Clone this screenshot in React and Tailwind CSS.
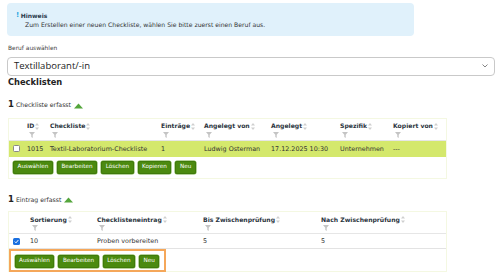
import React from "react";

const Sort = () => (
  <svg width="4" height="7" viewBox="0 0 4 7" className="ml-[1px] shrink-0">
    <path d="M2 0 L4 2.5 L0 2.5 Z" fill="#d0d0d0" />
    <path d="M0 4.5 L4 4.5 L2 7 Z" fill="#d0d0d0" />
  </svg>
);

const Filter = () => (
  <svg width="6" height="6" viewBox="0 0 6 6" className="block">
    <path d="M0 0 L6 0 L3.7 2.8 L3.7 6 L2.3 5 L2.3 2.8 Z" fill="#c4c4c4" />
  </svg>
);

const Th = ({ w, label, sort = true }) => (
  <div className={`${w} shrink-0 pl-[4px] pt-[4px]`}>
    <div className="flex items-center h-[7px] font-bold text-[6.1px] text-[#2b3440] whitespace-nowrap leading-none">
      <span>{label}</span>
      {sort && <Sort />}
    </div>
    <div className="pl-[2px] mt-[2px]">
      <Filter />
    </div>
  </div>
);

const Btn = ({ children }) => (
  <div className="h-[13px] px-[3.5px] flex items-center rounded-[2px] bg-[#4b8a0f] text-white text-[5.7px] leading-none border border-[#3f7a0a] shadow-[0_0_0_0.5px_#6fa53a] whitespace-nowrap">
    {children}
  </div>
);

const Caret = () => (
  <svg width="9" height="6" viewBox="0 0 9 6" className="ml-[3px]">
    <path d="M4.5 0.5 L9 5.5 L0 5.5 Z" fill="#54a63c" />
  </svg>
);

const Td = ({ w, children }) => (
  <div className={`${w} shrink-0 pl-[4px] whitespace-nowrap text-[#333333]`}>{children}</div>
);

export default function App() {
  return (
    <div className="w-[500px] h-[279px] overflow-hidden bg-white text-[#333] font-['DejaVu_Sans',sans-serif]">
      <div className="pl-[7px] pt-[3px]">
        {/* info */}
        <div className="w-[407px] h-[33px] rounded-[4px] bg-[#e0f1fb] pl-[9px] pt-[9px]">
          <div className="flex items-center text-[6px] leading-none font-bold text-[#2a3a4a]">
            <span className="text-[#2aa4e0] mr-[1.5px] text-[7px]">!</span>
            <span>Hinweis</span>
          </div>
          <div className="pl-[9px] mt-[3px] text-[6.1px] leading-none text-[#333]">
            Zum Erstellen einer neuen Checkliste, wählen Sie bitte zuerst einen Beruf aus.
          </div>
        </div>
        {/* label */}
        <div className="mt-[10px] pl-[1px] text-[5.9px] leading-none text-[#444]">Beruf auswählen</div>
        {/* select */}
        <div className="mt-[5px] w-[488px] h-[19px] border border-[#c9c9c9] rounded-[4px] flex items-center justify-between pl-[6px] pr-[6px] font-['Open_Sans',sans-serif] text-[9.5px] text-[#222]">
          <span>Textillaborant/-in</span>
          <svg width="6" height="4" viewBox="0 0 6 4">
            <path d="M0.5 0.5 L3 3 L5.5 0.5" stroke="#777" strokeWidth="0.9" fill="none" />
          </svg>
        </div>
        <div className="pl-[1px] mt-[2px] text-[8.3px] font-bold leading-none text-[#222]">Checklisten</div>

        {/* count 1 */}
        <div className="mt-[14px] pl-[1px] flex items-end leading-none">
          <span className="text-[8.5px] font-bold text-[#222]">1</span>
          <span className="text-[6.2px] ml-[2px] text-[#333] mb-[0.5px]">Checkliste erfasst</span>
          <Caret />
        </div>

        {/* table 1 */}
        <div className="mt-[9px] ml-[1px] w-[439px] h-[61px] border border-[#f4f8e2]">
          <div className="flex h-[22px] border-b border-[#e6e6e6]">
            <div className="w-[14px] shrink-0" />
            <Th w="w-[23px]" label="ID" />
            <Th w="w-[111px]" label="Checkliste" />
            <Th w="w-[43px]" label="Einträge" />
            <Th w="w-[67px]" label="Angelegt von" />
            <Th w="w-[69px]" label="Angelegt" />
            <Th w="w-[53px]" label="Spezifik" />
            <Th w="w-[58px]" label="Kopiert von" />
          </div>
          <div className="flex h-[16px] items-center bg-[#d4e86c] text-[6.4px] leading-none">
            <div className="w-[14px] shrink-0 pl-[4px]">
              <div className="w-[7px] h-[7px] bg-white border border-[#888] rounded-[1.5px]" />
            </div>
            <Td w="w-[23px]">1015</Td>
            <Td w="w-[111px]">Textil-Laboratorium-Checkliste</Td>
            <Td w="w-[43px]">1</Td>
            <Td w="w-[67px]">Ludwig Osterman</Td>
            <Td w="w-[69px]">17.12.2025 10:30</Td>
            <Td w="w-[53px]">Unternehmen</Td>
            <Td w="w-[58px]">---</Td>
          </div>
          <div className="flex gap-[4px] pl-[4px] pt-[4px]">
            <Btn>Auswählen</Btn>
            <Btn>Bearbeiten</Btn>
            <Btn>Löschen</Btn>
            <Btn>Kopieren</Btn>
            <Btn>Neu</Btn>
          </div>
        </div>

        {/* count 2 */}
        <div className="mt-[16px] pl-[1px] flex items-end leading-none">
          <span className="text-[8.5px] font-bold text-[#222]">1</span>
          <span className="text-[6.2px] ml-[2px] text-[#333] mb-[0.5px]">Eintrag erfasst</span>
          <Caret />
        </div>

        {/* table 2 */}
        <div className="mt-[8px] ml-[1px] w-[439px] h-[61px] border border-[#f4f8e2]">
          <div className="flex h-[22px] border-b border-[#e6e6e6]">
            <div className="w-[17px] shrink-0" />
            <Th w="w-[67px]" label="Sortierung" />
            <Th w="w-[106px]" label="Checklisteneintrag" />
            <Th w="w-[118px]" label="Bis Zwischenprüfung" />
            <Th w="w-[130px]" label="Nach Zwischenprüfung" />
          </div>
          <div className="flex h-[15px] items-center text-[6.4px] leading-none border-b border-[#e3e3e3]">
            <div className="w-[17px] shrink-0 pl-[4px]">
              <div className="w-[7px] h-[7px] bg-[#1a6fe0] rounded-[1.5px] flex items-center justify-center">
                <svg width="5" height="5" viewBox="0 0 5 5">
                  <path d="M0.8 2.6 L2 3.8 L4.3 1.1" stroke="white" strokeWidth="1" fill="none" />
                </svg>
              </div>
            </div>
            <Td w="w-[67px]">10</Td>
            <Td w="w-[106px]">Proben vorbereiten</Td>
            <Td w="w-[118px]">5</Td>
            <Td w="w-[130px]">5</Td>
          </div>
          <div className="w-fit h-[23px] -ml-[0.5px] border-2 border-solid border-[#f5a75a] flex gap-[4px] pl-[4px] pr-[5px] pt-[3.5px]">
            <Btn>Auswählen</Btn>
            <Btn>Bearbeiten</Btn>
            <Btn>Löschen</Btn>
            <Btn>Neu</Btn>
          </div>
        </div>
      </div>
    </div>
  );
}
